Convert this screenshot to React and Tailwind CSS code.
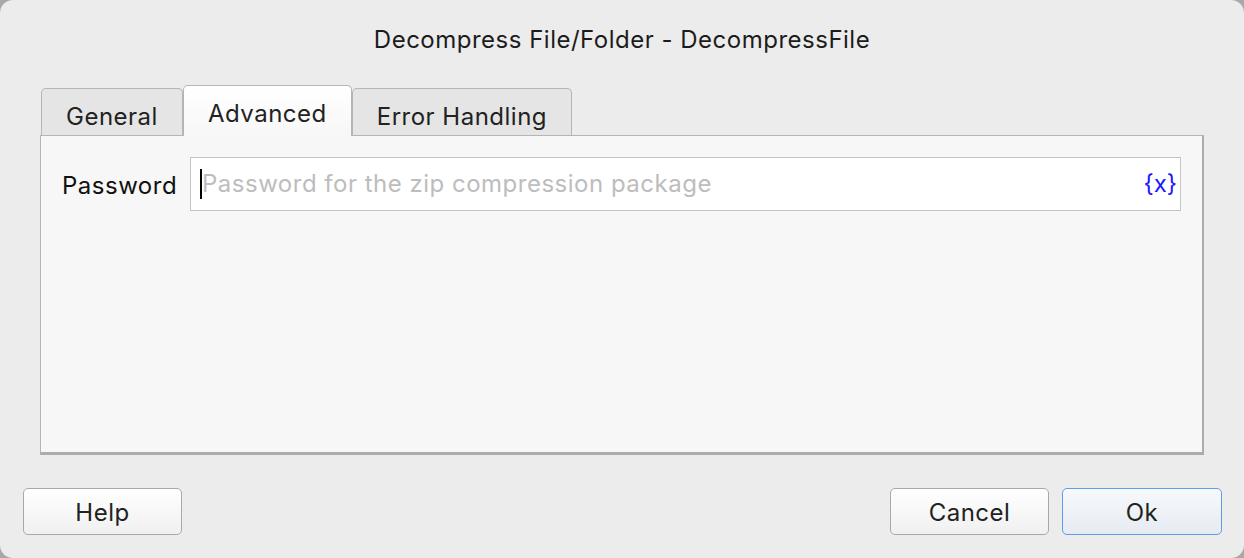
import React from 'react';

const font = { fontFamily: 'Inter, "Liberation Sans", sans-serif' };

const Tab = ({ label, active }) => (
  <div
    className={
      active
        ? "h-[51px] -mb-px px-[24px] pt-[10px] rounded-t-[5px] border border-b-0 border-[#b5b5b5] bg-gradient-to-b from-white to-[#f7f7f7] text-[24px] tracking-[0.5px] text-[#222] relative z-10"
        : "h-[47px] px-[24px] pt-[10px] rounded-t-[5px] border border-b-0 border-[#b5b5b5] bg-[#e5e5e5] text-[24px] tracking-[0.5px] text-[#222]"
    }
  >
    {label}
  </div>
);

const Btn = ({ label, primary, className }) => (
  <button
    className={
      "h-[47px] pt-[3px] rounded-[5px] border text-[24px] tracking-[0.5px] text-[#222] " +
      (primary
        ? "border-[#5e9ee8] bg-gradient-to-b from-[#f7f9fc] to-[#e6ebf2] "
        : "border-[#a9a9a9] bg-gradient-to-b from-white to-[#f0f0f0] ") +
      className
    }
  >
    {label}
  </button>
);

export default function App() {
  return (
    <div className="w-[1244px] h-[558px] bg-[#a8a8a8]" style={font}>
      <div className="h-full rounded-[13px] bg-[#ececec] flex flex-col">
        <div className="pt-[22px] h-[85px] text-center text-[24px] tracking-[0.5px] text-[#1c1c1c]">
          Decompress File/Folder - DecompressFile
        </div>

        <div className="flex items-end pl-[41px]">
          <Tab label="General" />
          <Tab label="Advanced" active />
          <Tab label="Error Handling" />
        </div>

        <div className="mx-[40px] h-[320px] bg-[#f7f7f7] border-l border-t border-[#b5b5b5] border-r-2 border-b-[3px] border-r-[#acacac] border-b-[#acacac] px-[21px] pt-[21px]">
          <div className="flex items-center">
            <div className="w-[128px] pt-[3px] text-[24px] tracking-[0.5px] text-[#111]">Password</div>
            <div className="flex-1 h-[54px] bg-white border border-[#c4c4c4] flex items-center pl-[9px] pr-[3px]">
              <div className="w-[2px] h-[30px] bg-black" />
              <div className="flex-1 text-[24px] tracking-[0.5px] text-[#bdbdbd]">Password for the zip compression package</div>
              <div className="text-[24px] text-[#1a1aff]">{'{x}'}</div>
            </div>
          </div>
        </div>

        <div className="flex items-center px-[22px] pt-[33px]">
          <Btn label="Help" className="w-[159px] ml-px" />
          <div className="flex-1" />
          <Btn label="Cancel" className="w-[159px]" />
          <Btn label="Ok" primary className="w-[160px] ml-[13px]" />
        </div>
      </div>
    </div>
  );
}
